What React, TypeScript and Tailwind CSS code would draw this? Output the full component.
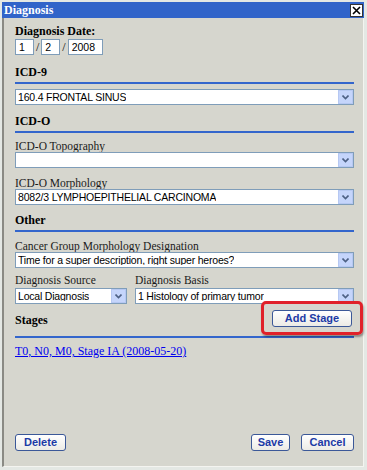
import React from "react";

const sans = { fontFamily: '"Liberation Sans", Arial, sans-serif' };

function Arrow() {
  return (
    <div className="w-[15px] h-[14px] bg-[#c5d5fb] border border-[#b6c8f2] flex items-center justify-center">
      <svg width="7" height="5" viewBox="0 0 7 5">
        <path d="M0.5 0.5 L3.5 3.5 L6.5 0.5" stroke="#4d6185" strokeWidth="1.6" fill="none" />
      </svg>
    </div>
  );
}

function Select({ value, className = "" }: { value: string; className?: string }) {
  return (
    <div className={"h-[16px] bg-white border border-[#7f9db9] flex items-center justify-between pl-[2px] pr-[0px] " + className}>
      <span className="text-[10.5px] tracking-[-0.2px] text-black leading-none whitespace-nowrap overflow-hidden" style={sans}>{value}</span>
      <Arrow />
    </div>
  );
}

function Heading({ children, className = "" }: { children: React.ReactNode; className?: string }) {
  return (
    <div className={className}>
      <div className="font-bold text-[12px] leading-[14px] text-black">{children}</div>
      <div className="mt-[3px] h-[2px] bg-[#3366cc]" />
    </div>
  );
}

function Label({ children, className = "" }: { children: React.ReactNode; className?: string }) {
  return <div className={"text-[11.5px] leading-[12px] text-[#1a1a1a] " + className}>{children}</div>;
}

function XpButton({ children, className = "" }: { children: React.ReactNode; className?: string }) {
  return (
    <button
      className={"h-[17px] bg-gradient-to-b from-white to-[#ecebe6] border border-[#3b5898] rounded-[3px] text-[11px] font-bold text-[#1c3aa6] leading-none " + className}
      style={sans}
    >
      {children}
    </button>
  );
}

function DateBox({ value, w }: { value: string; w: string }) {
  return (
    <div className={"h-[16px] bg-white border border-[#7f9db9] text-[10.5px] pl-[3px] leading-[14px] " + w} style={sans}>
      {value}
    </div>
  );
}

export default function App() {
  return (
    <div className="w-[367px] h-[470px] bg-[#e4e8e4] pt-[2px] pl-[2px] overflow-hidden" style={{ fontFamily: '"Liberation Serif", "Times New Roman", serif' }}>
      <div className="w-[362px] h-[465px] flex flex-col">
        <div className="h-[16px] bg-[#3164c9] flex items-center justify-between pl-[2px] pr-[1px]">
          <span className="text-white font-bold text-[12px] leading-none">Diagnosis</span>
          <div className="w-[13px] h-[13px] bg-white border border-[#333] flex items-center justify-center">
            <svg width="9" height="9" viewBox="0 0 9 9">
              <path d="M1 1 L8 8 M8 1 L1 8" stroke="#000" strokeWidth="1.6" />
            </svg>
          </div>
        </div>
        <div className="flex-1 bg-[#d6d6ce] border-l-2 border-l-[#8a8a84] border-r border-r-[#f4f4f0] border-b border-b-[#f4f4f0] pl-[11px] pr-[9px] pt-[6px] flex flex-col">
          <div className="font-bold text-[12px] leading-[14px] text-black">Diagnosis Date:</div>
          <div className="flex items-center text-[12px]">
            <DateBox value="1" w="w-[19px]" />
            <span className="mx-[2px]">/</span>
            <DateBox value="2" w="w-[19px]" />
            <span className="mx-[2px]">/</span>
            <DateBox value="2008" w="w-[35px]" />
          </div>

          <Heading className="mt-[9px]">ICD-9</Heading>
          <Select className="mt-[5px]" value="160.4 FRONTAL SINUS" />

          <Heading className="mt-[9px]">ICD-O</Heading>
          <Label className="mt-[7px]">ICD-O Topography</Label>
          <Select value="" />
          <Label className="mt-[9px]">ICD-O Morphology</Label>
          <Select value="8082/3 LYMPHOEPITHELIAL CARCINOMA" />

          <Heading className="mt-[8px]">Other</Heading>
          <Label className="mt-[8px]">Cancer Group Morphology Designation</Label>
          <Select value="Time for a super description, right super heroes?" />
          <div className="flex gap-[8px] mt-[6px]">
            <div className="w-[112px]">
              <Label>Diagnosis Source</Label>
              <Select className="mt-[2px]" value="Local Diagnosis" />
            </div>
            <div className="flex-1">
              <Label>Diagnosis Basis</Label>
              <Select className="mt-[2px]" value="1 Histology of primary tumor" />
            </div>
          </div>

          <div className="relative mt-[9px]">
            <div className="font-bold text-[12px] leading-[14px] text-black">Stages</div>
            <div className="mt-[9px] h-[2px] bg-[#3366cc]" />
            <div className="absolute left-[246px] top-[-12px] w-[102px] h-[34px] border-[3px] border-[#e0212a] rounded-[5px] shadow-[1px_2px_2px_rgba(0,0,0,0.35)] flex items-center justify-center">
              <XpButton className="w-[80px]">Add Stage</XpButton>
            </div>
          </div>
          <div className="mt-[5px] leading-[14px]">
            <a href="#" className="text-[12px] text-[#0000ee] underline">T0, N0, M0, Stage IA (2008-05-20)</a>
          </div>

          <div className="mt-auto mb-[15px] flex items-center">
            <XpButton className="w-[51px]">Delete</XpButton>
            <div className="flex-1" />
            <XpButton className="w-[39px]">Save</XpButton>
            <XpButton className="w-[53px] ml-[11px]">Cancel</XpButton>
          </div>
        </div>
      </div>
    </div>
  );
}
